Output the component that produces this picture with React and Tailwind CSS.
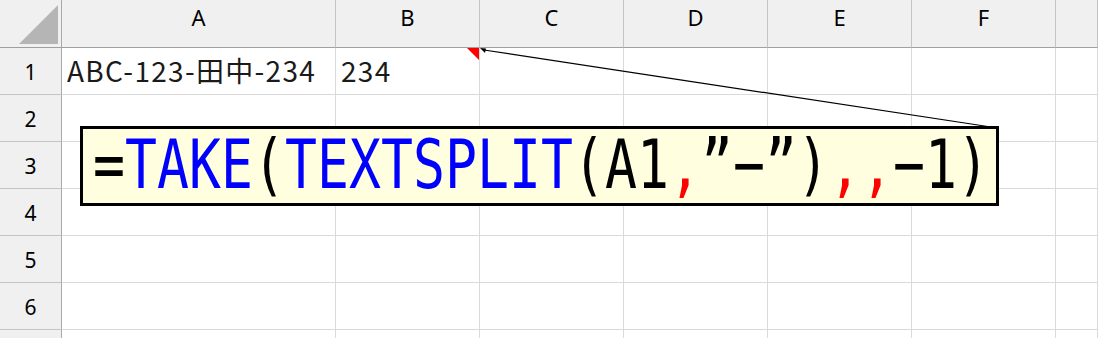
const columns = ["A", "B", "C", "D", "E", "F", ""];
const rows = [1, 2, 3, 4, 5, 6, 7];

const cells = {
  "1-A": "ABC-123-田中-234",
  "1-B": "234",
};

const formula = [
  ["=", "text-black"],
  ["TAKE", "text-[#0000ff]"],
  ["(", "text-black"],
  ["TEXTSPLIT", "text-[#0000ff]"],
  ["(A1", "text-black"],
  [",", "text-[#ff0000]"],
  ["”−”)", "text-black"],
  [",,", "text-[#ff0000]"],
  ["−1)", "text-black"],
];

const App = () => {
  return (
    <div className="relative h-[338px] w-[1098px] overflow-hidden bg-white">
      <div className="grid grid-cols-[62px_274px_144px_144px_144px_144px_144px_1fr] grid-rows-[48px_repeat(7,47px)]">
        {/* Corner */}
        <div className="relative border-r border-b border-r-[#a9a9a9] border-b-[#9f9f9f] bg-[#f0f0f0]">
          <svg className="absolute left-0 top-0" width="61" height="47">
            <polygon points="19,44 58,44 58,5" fill="#b5b5b5" />
          </svg>
        </div>

        {/* Column headers */}
        {columns.map((col, i) => (
          <div
            key={"h" + i}
            className="flex justify-center border-r border-b border-r-[#c4c4c4] border-b-[#9f9f9f] bg-[#f0f0f0] pt-[6px] font-['Noto_Sans',sans-serif] text-[22px] leading-none text-black"
          >
            {col}
          </div>
        ))}

        {/* Rows */}
        {rows.map((r) => (
          <>
            <div
              key={"r" + r}
              className="flex items-center justify-center border-r border-b border-r-[#a9a9a9] border-b-[#c4c4c4] bg-[#f0f0f0] pt-[3px] font-['Noto_Sans',sans-serif] text-[21px] leading-none text-black"
            >
              {r < 7 ? r : ""}
            </div>
            {columns.map((col, i) => (
              <div
                key={r + "-" + i}
                className="flex items-center border-r border-b border-[#dadada] pl-[5px] pb-[3px] font-['Noto_Sans_CJK_JP',sans-serif] text-[28px] leading-none tracking-[1.3px] whitespace-nowrap text-[#1a1a1a]"
              >
                {cells[r + "-" + col]}
              </div>
            ))}
          </>
        ))}
      </div>

      {/* Comment arrow and indicator */}
      <svg className="pointer-events-none absolute left-0 top-0" width="1098" height="338">
        <polygon points="467,48 479,48 479,60" fill="#ff0000" />
        <line x1="484" y1="50" x2="991" y2="127" stroke="#000" strokeWidth="1.2" />
        <polygon points="480,48 486,48.5 485,53" fill="#000" />
      </svg>

      {/* Formula callout */}
      <div className="absolute left-[80px] top-[126px] flex h-[80px] w-[919px] items-center border-[3px] border-black bg-[#ffffe0] pl-[10px]">
        <span className="inline-block origin-center scale-y-[1.28] font-['DejaVu_Sans_Mono',monospace] text-[53.15px] leading-none whitespace-pre">
          {formula.map(([t, c], i) => (
            <span key={i} className={c}>
              {t}
            </span>
          ))}
        </span>
      </div>
    </div>
  );
};

export default App;
